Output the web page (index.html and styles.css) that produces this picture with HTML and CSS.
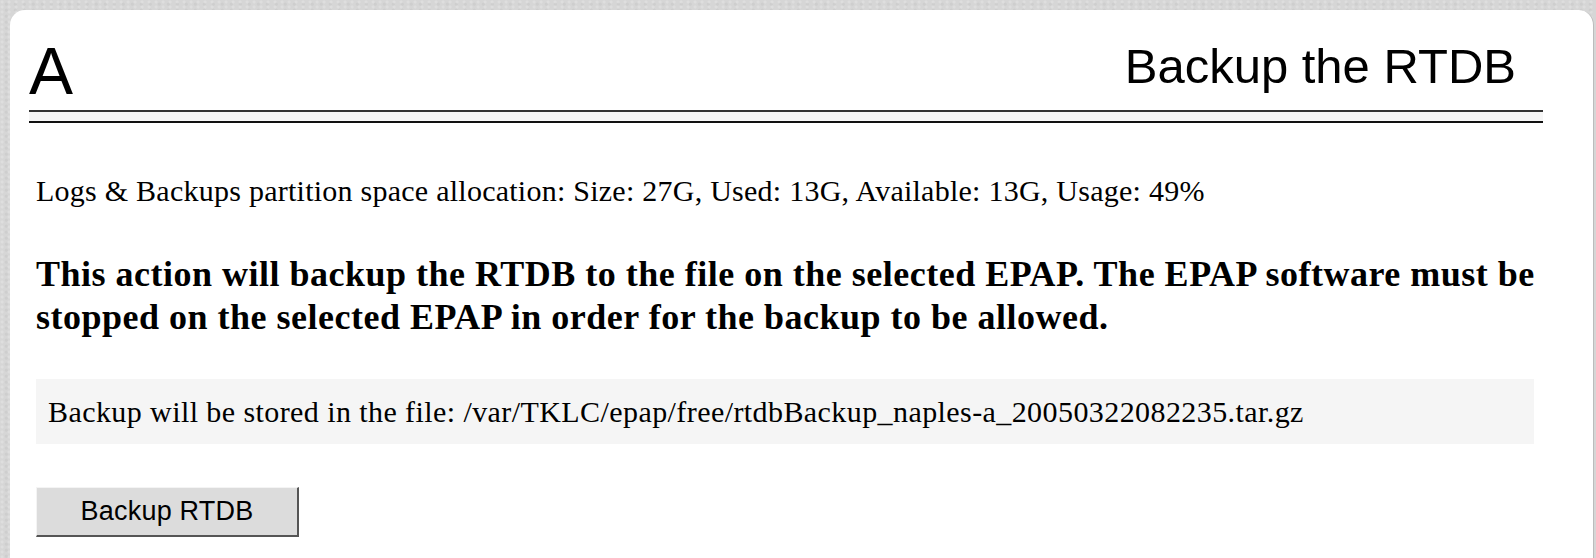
FILE: index.html
```html
<!DOCTYPE html>
<html>
<head>
<meta charset="utf-8">
<title>Backup the RTDB</title>
<link rel="stylesheet" href="styles.css">
</head>
<body>
<div class="card">
  <div class="header">
    <div class="logo">A</div>
    <div class="title">Backup the RTDB</div>
  </div>
  <div class="rule"></div>
  <div class="content">
    <p class="usage">Logs &amp; Backups partition space allocation: Size: 27G, Used: 13G, Available: 13G, Usage: 49%</p>
    <p class="warning">This action will backup the RTDB to the file on the selected EPAP. The EPAP software must be stopped on the selected EPAP in order for the backup to be allowed.</p>
    <div class="path">Backup will be stored in the file: /var/TKLC/epap/free/rtdbBackup_naples-a_20050322082235.tar.gz</div>
    <button class="btn" type="button">Backup RTDB</button>
  </div>
</div>
</body>
</html>
```
FILE: styles.css
```css
html, body {
  margin: 0;
  height: 558px;
  overflow: hidden;
}
body {
  background-color: #d6d6d6;
  background-image:
    radial-gradient(circle at 30% 40%, rgba(255,255,255,0.2) 0 1px, transparent 2px),
    radial-gradient(circle at 70% 70%, rgba(0,0,0,0.04) 0 1px, transparent 2px);
  background-size: 7px 5px, 9px 6px;
  padding: 10px 2px 0 10px;
  box-sizing: border-box;
  color: #000;
}
.card {
  background: #fff;
  border-radius: 15px 15px 0 0;
  height: 548px;
  box-sizing: border-box;
  padding: 28px 50px 0 19px;
  border-right: 1px solid #bcbcbc;
}
.header {
  display: flex;
  justify-content: space-between;
  align-items: flex-start;
}
.logo {
  font-family: "Liberation Sans", Arial, sans-serif;
  font-size: 66px;
  line-height: 1;
}
.title {
  font-family: "Liberation Sans", Arial, sans-serif;
  font-size: 49px;
  line-height: 1;
  margin-top: 4px;
  margin-right: 27px;
}
.rule {
  margin-top: 6px;
  height: 9px;
  border-top: 2px solid #333;
  border-bottom: 2px solid #111;
  background: #f6f6f6;
}
.content {
  padding: 0 9px 0 7px;
  font-family: "Liberation Serif", "Times New Roman", serif;
}
.usage {
  margin: 51px 0 0;
  font-size: 30px;
  line-height: 34px;
  letter-spacing: 0.25px;
}
.warning {
  margin: 45px -14px 0 0;
  font-size: 36px;
  font-weight: bold;
  line-height: 43px;
  letter-spacing: 0.5px;
}
.path {
  margin-top: 40px;
  background: #f5f5f5;
  padding: 15px 12px;
  font-size: 30px;
  line-height: 35px;
  letter-spacing: 0.42px;
}
.btn {
  display: block;
  margin-top: 43px;
  width: 263px;
  height: 50px;
  padding: 0;
  background: #dcdcdc;
  border-style: solid;
  border-width: 1px 2px 2px 1px;
  border-color: #f4f4f4 #555 #555 #f4f4f4;
  font-family: "Liberation Sans", Arial, sans-serif;
  font-size: 27px;
  letter-spacing: 0.2px;
  color: #000;
}
```
